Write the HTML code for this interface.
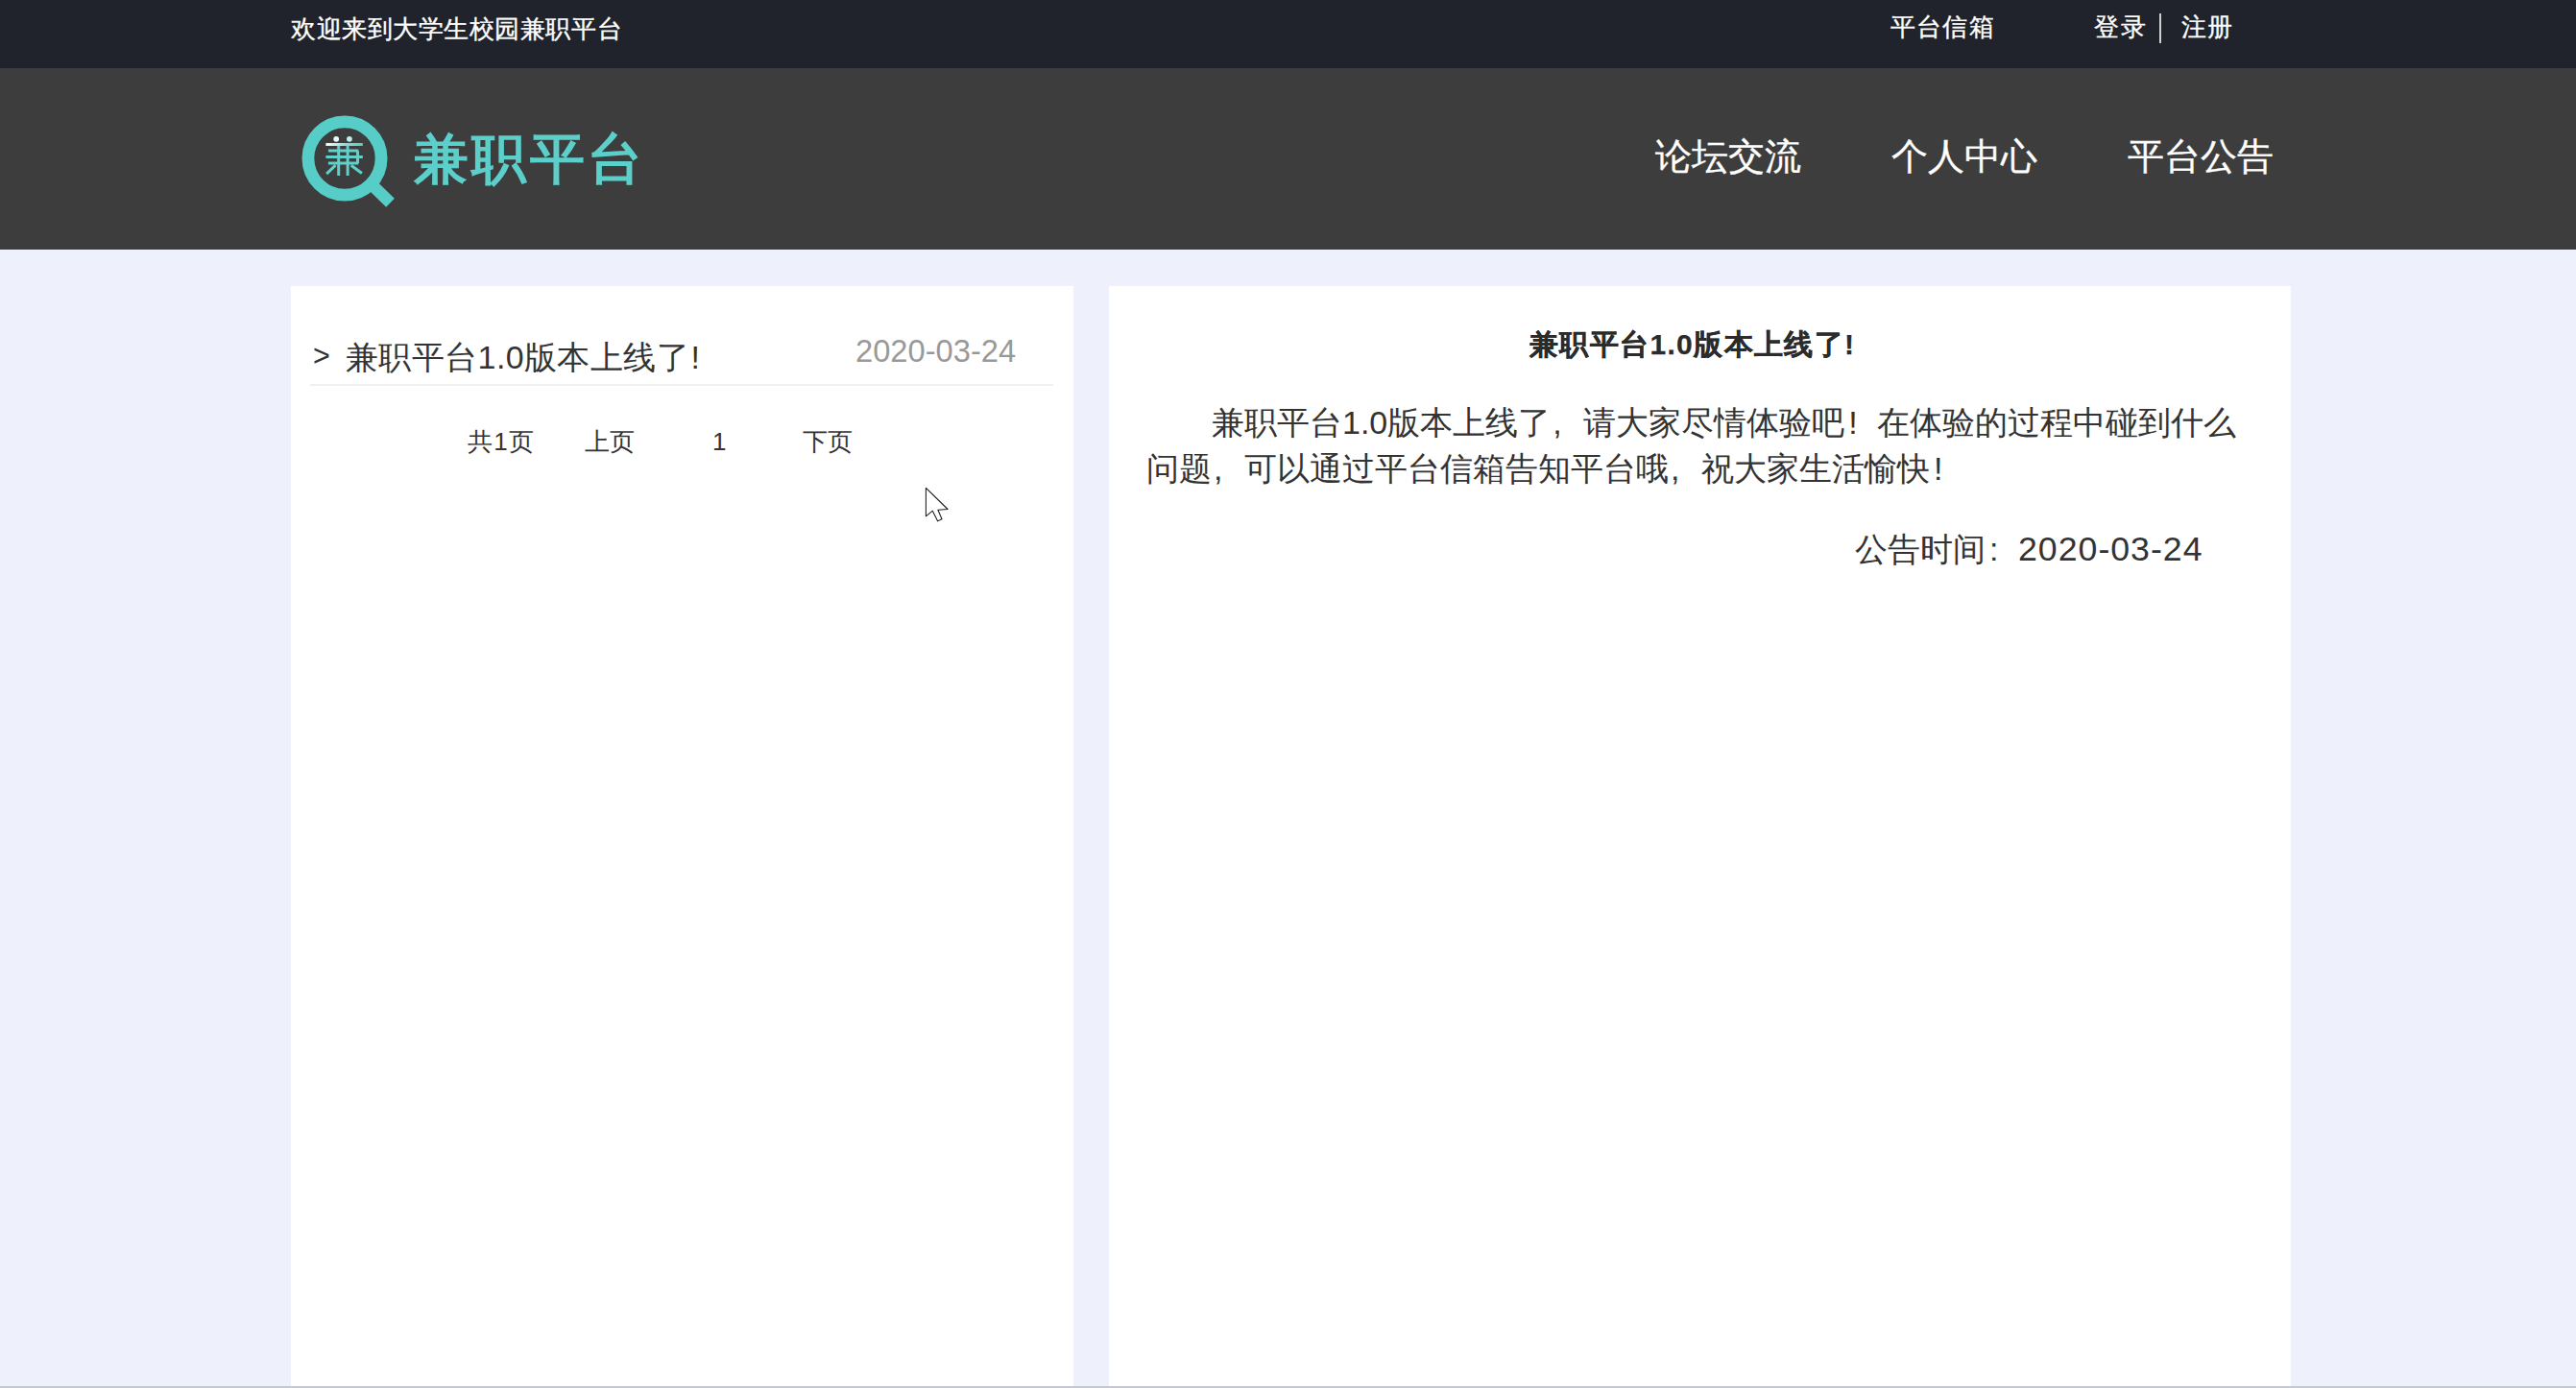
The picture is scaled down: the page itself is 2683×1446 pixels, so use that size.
<!DOCTYPE html>
<html>
<head>
<meta charset="utf-8">
<style>
html,body{margin:0;padding:0;}
body{width:2683px;height:1446px;position:relative;overflow:hidden;background:#eef0fc;font-family:"Liberation Sans",sans-serif;}
.abs{position:absolute;white-space:nowrap;line-height:1;}
#topbar{position:absolute;left:0;top:0;width:2683px;height:71px;background:#20232b;}
#header{position:absolute;left:0;top:71px;width:2683px;height:189px;background:#3d3d3d;}
#bottomline{position:absolute;left:0;top:1444px;width:2683px;height:2px;background:#c3c8d1;}
.panel{position:absolute;background:#fff;top:298px;height:1146px;}
#lp{left:303px;width:815px;}
#rp{left:1155px;width:1231px;}
.w{color:#fff;-webkit-text-stroke:0.35px #fff;}
.fp{display:inline-block;width:1em;box-sizing:border-box;text-align:left;}
</style>
</head>
<body>
<div id="topbar"></div>
<div id="header"></div>
<div class="panel" id="lp"></div>
<div class="panel" id="rp"></div>
<div id="bottomline"></div>

<!-- top bar text -->
<div class="abs w" id="t-welcome" style="left:303px;top:16.5px;font-size:26px;letter-spacing:0.55px;">欢迎来到大学生校园兼职平台</div>
<div class="abs w" id="t-mail" style="left:1969px;top:15px;font-size:26px;letter-spacing:1.2px;">平台信箱</div>
<div class="abs w" id="t-login" style="left:2181px;top:15px;font-size:26px;letter-spacing:1.5px;">登录</div>
<div class="abs" id="t-bar" style="left:2249px;top:14px;width:2px;height:31px;background:#d0d0d0;"></div>
<div class="abs w" id="t-reg" style="left:2272px;top:15px;font-size:26px;letter-spacing:1.2px;">注册</div>

<!-- logo -->
<svg class="abs" id="logo" style="left:300px;top:110px;" width="130" height="120" viewBox="0 0 130 120">
  <defs><linearGradient id="lg" gradientUnits="userSpaceOnUse" x1="39" y1="0" x2="78" y2="0"><stop offset="0" stop-color="#f4ffff"/><stop offset="0.6" stop-color="#7fd9d4"/><stop offset="1" stop-color="#56cdc7"/></linearGradient></defs>
  <circle cx="59" cy="55" r="38.1" fill="none" stroke="#56cdc7" stroke-width="12.8"/>
  <line x1="85.5" y1="80.8" x2="106.5" y2="101.3" stroke="#56cdc7" stroke-width="12.4"/>
  <g stroke="#5fd0ca" stroke-width="3" fill="none">
    <line x1="41.9" y1="47.1" x2="73.3" y2="47.1"/>
    <line x1="39.4" y1="53.6" x2="77.8" y2="53.6"/>
    <line x1="41.9" y1="60.1" x2="73.3" y2="60.1"/>
    <line x1="72.5" y1="47.1" x2="72.5" y2="60.1"/>
    <line x1="52.7" y1="40.6" x2="52.7" y2="73"/>
    <line x1="62.1" y1="40.6" x2="62.1" y2="73"/>
    <line x1="49.5" y1="62.2" x2="40.1" y2="71.2"/>
    <line x1="65.7" y1="62.2" x2="76.9" y2="70.5"/>
  </g>
  <line x1="39.4" y1="40.6" x2="77.8" y2="40.6" stroke="url(#lg)" stroke-width="3"/>
  <circle cx="50.2" cy="34.8" r="2.9" fill="#f2fbfb"/>
  <circle cx="63.9" cy="34.8" r="2.9" fill="#bfeeee"/>
</svg>
<div class="abs" id="logo-text" style="left:431px;top:137px;letter-spacing:3.3px;font-size:57px;color:#5ccfca;font-weight:bold;">兼职平台</div>

<!-- nav -->
<div class="abs w" id="nav1" style="left:1724px;top:145px;font-size:37.5px;">论坛交流</div>
<div class="abs w" id="nav2" style="left:1970px;top:145px;font-size:37.5px;">个人中心</div>
<div class="abs w" id="nav3" style="left:2216px;top:145px;font-size:37.5px;">平台公告</div>

<!-- left panel -->
<div class="abs" id="l-arrow" style="left:326px;top:355px;font-size:30.5px;color:#333;">&gt;</div>
<div class="abs" id="l-title" style="left:360px;top:355px;font-size:34px;letter-spacing:0.4px;color:#333;">兼职平台1.0版本上线了<span style="margin-left:1.5px">!</span></div>
<div class="abs" id="l-date" style="left:891px;top:350px;font-size:32.7px;letter-spacing:0px;color:#999;">2020-03-24</div>
<div class="abs" id="l-sep" style="left:323px;top:400px;width:774px;height:2px;background:#f0f0f0;"></div>
<div class="abs" id="p1" style="left:487px;top:446.5px;letter-spacing:1.2px;font-size:26px;color:#333;">共1页</div>
<div class="abs" id="p2" style="left:609px;top:446.5px;font-size:26px;color:#333;">上页</div>
<div class="abs" id="p3" style="left:742px;top:446.5px;font-size:26px;color:#333;">1</div>
<div class="abs" id="p4" style="left:836px;top:446.5px;font-size:26px;color:#333;">下页</div>

<svg class="abs" id="cursor" style="left:950px;top:500px;" width="50" height="50" viewBox="0 0 50 50">
  <path d="M14.4 8.3 L14.4 37.8 L21.3 32.2 L26.7 42.9 L31 40.7 L26.9 31.3 L37.1 30.5 Z" fill="#fff" stroke="#1a1a1a" stroke-width="1.05" stroke-linejoin="round"/>
</svg>

<!-- right panel -->
<div class="abs" id="r-title" style="left:1593px;top:343.5px;letter-spacing:1.35px;font-size:30px;color:#2b2b2b;font-weight:bold;-webkit-text-stroke:0.25px #2b2b2b;">兼职平台1.0版本上线了!</div>
<div class="abs" id="r-l1" style="left:1262px;top:422.5px;font-size:34px;color:#333;">兼职平台1.0版本上线了<span class="fp" style="padding-left:0.06em">,</span>请大家尽情体验吧<span class="fp" style="padding-left:0.12em">!</span>在体验的过程中碰到什么</div>
<div class="abs" id="r-l2" style="left:1194px;top:470.5px;font-size:34px;color:#333;">问题<span class="fp" style="padding-left:0.06em">,</span>可以通过平台信箱告知平台哦<span class="fp" style="padding-left:0.06em">,</span>祝大家生活愉快<span class="fp" style="padding-left:0.12em">!</span></div>
<div class="abs" id="r-date" style="left:1932px;top:555px;font-size:34px;color:#333;">公告时间<span class="fp" style="padding-left:0.12em">:</span><span style="font-size:35.7px;letter-spacing:1px">2020-03-24</span></div>
</body>
</html>
